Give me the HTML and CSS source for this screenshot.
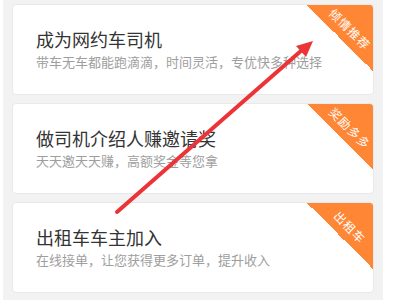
FILE: index.html
```html
<!DOCTYPE html>
<html lang="zh-CN">
<head>
<meta charset="utf-8">
<link rel="stylesheet" href="styles.css">
</head>
<body>
<div class="panel">
  <div class="card">
    <div class="title">成为网约车司机</div>
    <div class="sub">带车无车都能跑滴滴，时间灵活，专优快多种选择</div>
    <div class="ribbon"><span>倾情推荐</span></div>
  </div>
  <div class="card">
    <div class="title">做司机介绍人赚邀请奖</div>
    <div class="sub">天天邀天天赚，高额奖金等您拿</div>
    <div class="ribbon"><span>奖励多多</span></div>
  </div>
  <div class="card">
    <div class="title">出租车车主加入</div>
    <div class="sub">在线接单，让您获得更多订单，提升收入</div>
    <div class="ribbon"><span>出租车</span></div>
  </div>
</div>
<svg class="arrow" width="400" height="300" viewBox="0 0 400 300">
  <line x1="117" y1="212" x2="302" y2="50" stroke="#ec3438" stroke-width="4" stroke-linecap="round"/>
  <polygon points="313,41 306,57 296,46" fill="#ec3438"/>
</svg>
</body>
</html>
```

FILE: styles.css
```css
html, body {
  margin: 0;
  padding: 0;
  background: #ffffff;
  font-family: "Noto Sans CJK SC", "Noto Sans", sans-serif;
}

.panel {
  margin-left: 3px;
  width: 380px;
  height: 300px;
  box-sizing: border-box;
  padding: 4px 9px 0 9px;
  background: #f2f2f2;
  display: flex;
  flex-direction: column;
  gap: 8px;
  overflow: hidden;
}

.card {
  position: relative;
  height: 91px;
  box-sizing: border-box;
  background: #ffffff;
  border: 1px solid #e9e9e9;
  border-radius: 4px;
  padding: 22px 0 0 23px;
  overflow: hidden;
}

.title {
  font-size: 18px;
  line-height: 24px;
  color: #333333;
}

.sub {
  margin-top: 2px;
  font-size: 13px;
  line-height: 18px;
  color: #9e9e9e;
}

.ribbon {
  position: absolute;
  top: 0;
  right: 0;
  width: 66px;
  height: 66px;
  background: linear-gradient(to bottom left, #ff8634 50%, transparent 50%);
}

.ribbon span {
  position: absolute;
  left: 43px;
  top: 24px;
  transform: translate(-50%, -50%) rotate(45deg);
  white-space: nowrap;
  font-size: 12px;
  line-height: 14px;
  letter-spacing: 1px;
  color: #ffffff;
}

.arrow {
  position: absolute;
  left: 0;
  top: 0;
  pointer-events: none;
}
```
